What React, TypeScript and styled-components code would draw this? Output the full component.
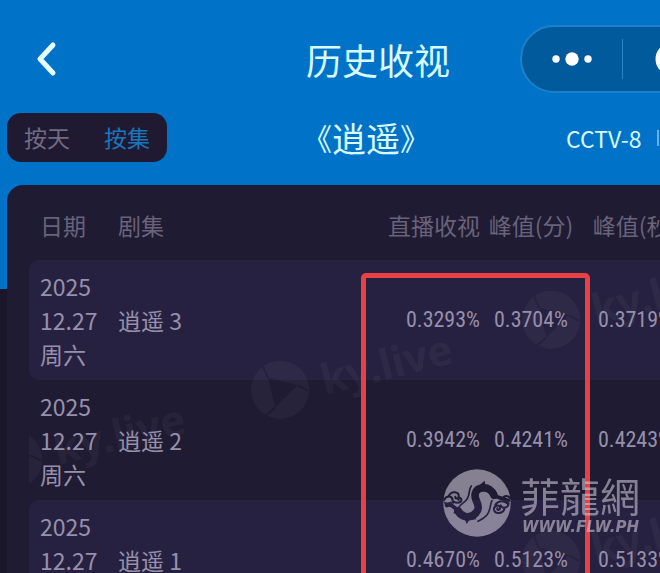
import React from "react";
import styled, { createGlobalStyle } from "styled-components";

const GlobalStyle = createGlobalStyle`
  * { box-sizing: border-box; }
  body {
    margin: 0;
    background: #1a172a;
    font-family: "Noto Sans CJK SC", "Noto Sans", sans-serif;
  }
  button { font: inherit; border: 0; padding: 0; background: none; cursor: pointer; }
`;

const Page = styled.main`
  position: relative;
  height: 100vh;
  overflow: hidden;
  background: linear-gradient(#0073c8 289px, #1a172a 289px);
`;

const TopBar = styled.header`
  display: grid;
  grid-template-columns: minmax(0, 1fr) auto 140px;
  column-gap: 70px;
  align-items: center;
  padding-top: 25px;
`;

const BackButton = styled.button`
  justify-self: start;
  margin-left: 34px;
  height: 36px;
  svg { display: block; }
`;

const Title = styled.h1`
  margin: 0;
  color: #d9fbff;
  font-size: 36px;
  line-height: 48px;
  font-weight: 400;
`;

const Capsule = styled.div`
  display: flex;
  align-items: center;
  width: 204px;
  height: 68px;
  border: 2px solid #1c80cd;
  border-radius: 34px;
  background: #005a9c;
`;

const CapsuleButton = styled.button`
  flex: 1;
  height: 40px;
  display: flex;
  align-items: center;
  justify-content: center;
  & + & { border-left: 1px solid #2b83c1; }
`;

const SubBar = styled.div`
  display: grid;
  grid-template-columns: minmax(0, 1fr) auto 94px;
  column-gap: 136px;
  align-items: center;
  margin-top: 20px;
  padding-left: 7px;
  color: #d9fbff;
`;

const Toggle = styled.div`
  justify-self: start;
  display: flex;
  gap: 34px;
  padding: 0 17px;
  height: 49px;
  border-radius: 14px;
  background: #1f1a32;
`;

const ToggleButton = styled.button<{ $active?: boolean }>`
  color: ${(p) => (p.$active ? "#1d75b9" : "#716c83")};
  font-size: 23px;
  line-height: 49px;
  white-space: nowrap;
`;

const ShowName = styled.h2`
  display: flex;
  align-items: center;
  margin: 0;
  font-size: 34px;
  line-height: 49px;
  font-weight: 400;
`;

const Bracket = styled.span`
  font-size: 30px;
`;

const Channel = styled.div`
  display: flex;
  align-items: center;
  gap: 16px;
  font-size: 23px;
  line-height: 48px;
  white-space: nowrap;
`;

const ChannelRule = styled.span`
  width: 2px;
  height: 16px;
  background: #63b0e2;
`;

const Panel = styled.section`
  position: relative;
  margin: 23px 0 0 7px;
  padding-left: 22px;
  border-radius: 16px 0 0 0;
  background: #1f1b33;
`;

const RatingsTable = styled.table`
  position: relative;
  width: calc(100% + 28px);
  table-layout: fixed;
  border-spacing: 0;
  font-size: 23px;
  line-height: 34px;
`;

const Col = styled.col<{ $width?: number }>`
  width: ${(p) => (p.$width ? `${p.$width}px` : "auto")};
`;

type Align = "left" | "center" | "right";

const HeadCell = styled.th<{ $align?: Align }>`
  height: 75px;
  padding: 5px 0 0;
  color: #686379;
  font-weight: 400;
  white-space: nowrap;
  text-align: ${(p) => p.$align ?? "left"};
  &:first-child { padding-left: 11px; }
`;

const Row = styled.tr`
  &:nth-child(odd) td { background: #272141; }
`;

const Cell = styled.td`
  height: 120px;
  padding: 0;
  color: #9690ab;
  &:first-child { padding-left: 11px; border-radius: 10px 0 0 10px; }
`;

const DateLine = styled.div`
  height: 34px;
`;

const NumberCell = styled(Cell)<{ $align: Align }>`
  text-align: ${(p) => p.$align};
  font-family: "Roboto Condensed", "Liberation Sans Narrow", Roboto, sans-serif;
  font-size: 22px;
`;

const Highlight = styled.div`
  position: absolute;
  top: 88px;
  right: 70px;
  bottom: -8px;
  width: 229px;
  border: 5px solid #e84145;
  border-radius: 5px;
  pointer-events: none;
`;

const MarkLayer = styled.div`
  position: absolute;
  inset: 0 0 0 22px;
  overflow: hidden;
  pointer-events: none;
`;

const Mark = styled.div<{ $x: number; $y: number }>`
  position: absolute;
  left: ${(p) => p.$x}px;
  top: ${(p) => p.$y}px;
  display: flex;
  align-items: center;
  gap: 12px;
  color: #8c88a0;
  opacity: 0.08;
  font: 700 42px/60px "Noto Sans", sans-serif;
  transform: rotate(-14deg);
  white-space: nowrap;
`;

const SiteLogo = styled.div`
  position: absolute;
  left: 435px;
  top: 283px;
  display: flex;
  align-items: center;
  gap: 8px;
  color: #c9c5d3;
  opacity: 0.6;
  pointer-events: none;
`;

const SiteWords = styled.div`
  display: grid;
  font-family: "Noto Sans CJK TC", sans-serif;
  font-size: 40px;
  line-height: 48px;
  font-weight: 400;
  white-space: nowrap;
`;

const SiteAddress = styled.span`
  padding-left: 2px;
  font: italic 700 15px/16px "DejaVu Sans", sans-serif;
`;

const rows = [
  { episode: "逍遥 3", live: "0.3293%", minute: "0.3704%", second: "0.3719%" },
  { episode: "逍遥 2", live: "0.3942%", minute: "0.4241%", second: "0.4243%" },
  { episode: "逍遥 1", live: "0.4670%", minute: "0.5123%", second: "0.5133%" },
];

function Watermark({ x, y }: { x: number; y: number }) {
  return (
    <Mark $x={x} $y={y}>
      <svg width="60" height="60" viewBox="0 0 60 60">
        <path
          fill="currentColor"
          fillRule="evenodd"
          d="M30 1A29 29 0 1 1 30 59A29 29 0 1 1 30 1ZM21 15V46L48 30Z"
        />
        <path stroke="#1f1b33" strokeWidth="2" d="M21 15 19 3M48 30l9 8M21 46l-12 6" />
      </svg>
      ky.live
    </Mark>
  );
}

function DragonLogo() {
  return (
    <svg width="70" height="70" viewBox="0 0 210 210" aria-hidden="true">
      <defs>
        <mask id="dragon">
          <circle cx="105" cy="105" r="101" fill="#fff" />
          <g fill="none" stroke="#000" strokeLinecap="round" strokeLinejoin="round">
            <path strokeWidth="23" d="M48 128C56 146 80 152 96 140C114 126 110 112 103 98C94 78 102 60 122 60C138 58 150 68 156 82" />
            <path strokeWidth="12" d="M14 112C28 106 36 118 50 130M154 80C168 92 180 88 198 98" />
            <path strokeWidth="5" d="M88 54C80 62 84 78 76 92C70 104 58 106 52 116M150 98C142 112 148 126 134 142C126 152 116 156 108 160" />
            <path strokeWidth="6" d="M6 96C14 80 32 84 32 98M20 84C30 66 52 72 50 86C48 94 38 92 40 86M34 100C46 108 60 104 58 94C56 86 46 90 50 96M8 104C16 112 28 100 34 104" />
            <path strokeWidth="6" d="M204 92C200 80 184 82 184 92M200 106C198 122 180 122 176 112M188 120C184 138 160 140 156 126C154 112 174 108 174 120C174 128 164 128 166 121M160 110C170 98 184 98 196 106" />
          </g>
          <path d="M112 52L128 38L130 50L146 56L156 70L164 72L160 92L140 70ZM66 146L74 168L82 156L104 154L92 142ZM40 120L34 136L54 140Z" />
        </mask>
      </defs>
      <rect width="210" height="210" fill="currentColor" mask="url(#dragon)" />
    </svg>
  );
}

export default function App() {
  return (
    <>
      <GlobalStyle />
      <Page>
        <TopBar>
          <BackButton aria-label="返回">
            <svg width="26" height="36" viewBox="0 0 26 36" fill="none">
              <path d="M19 4 6 18l13 14" stroke="#e8ffff" strokeWidth="5" strokeLinecap="round" strokeLinejoin="round" />
            </svg>
          </BackButton>
          <Title>历史收视</Title>
          <Capsule>
            <CapsuleButton aria-label="更多">
              <svg width="42" height="14" viewBox="0 0 42 14" fill="#fff">
                <circle cx="5" cy="7" r="3.7" />
                <circle cx="21" cy="7" r="6.7" />
                <circle cx="37" cy="7" r="3.7" />
              </svg>
            </CapsuleButton>
            <CapsuleButton aria-label="关闭">
              <svg width="34" height="34" viewBox="0 0 34 34">
                <circle cx="17" cy="17" r="14" fill="none" stroke="#fff" strokeWidth="5" />
                <circle cx="17" cy="17" r="5" fill="#fff" />
              </svg>
            </CapsuleButton>
          </Capsule>
        </TopBar>
        <SubBar>
          <Toggle>
            <ToggleButton>按天</ToggleButton>
            <ToggleButton $active aria-pressed="true">按集</ToggleButton>
          </Toggle>
          <ShowName>
            <Bracket>《</Bracket>逍遥<Bracket>》</Bracket>
          </ShowName>
          <Channel>
            CCTV-8
            <ChannelRule />
          </Channel>
        </SubBar>
        <Panel>
          <RatingsTable>
            <colgroup>
              <Col $width={89} />
              <Col />
              <Col $width={108} />
              <Col $width={102} />
              <Col $width={106} />
            </colgroup>
            <thead>
              <tr>
                <HeadCell>日期</HeadCell>
                <HeadCell>剧集</HeadCell>
                <HeadCell $align="right">直播收视</HeadCell>
                <HeadCell $align="center">峰值(分)</HeadCell>
                <HeadCell $align="center">峰值(秒)</HeadCell>
              </tr>
            </thead>
            <tbody>
              {rows.map((row) => (
                <Row key={row.episode}>
                  <Cell>
                    <DateLine>2025</DateLine>
                    <DateLine>12.27</DateLine>
                    <DateLine>周六</DateLine>
                  </Cell>
                  <Cell>{row.episode}</Cell>
                  <NumberCell $align="right">{row.live}</NumberCell>
                  <NumberCell $align="center">{row.minute}</NumberCell>
                  <NumberCell $align="center">{row.second}</NumberCell>
                </Row>
              ))}
            </tbody>
          </RatingsTable>
          <MarkLayer aria-hidden="true">
            <Watermark x={219} y={157} />
            <Watermark x={490} y={87} />
            <Watermark x={-48} y={227} />
            <Watermark x={490} y={327} />
          </MarkLayer>
          <Highlight />
          <SiteLogo>
            <DragonLogo />
            <SiteWords>
              菲龍網
              <SiteAddress>WWW.FLW.PH</SiteAddress>
            </SiteWords>
          </SiteLogo>
        </Panel>
      </Page>
    </>
  );
}
